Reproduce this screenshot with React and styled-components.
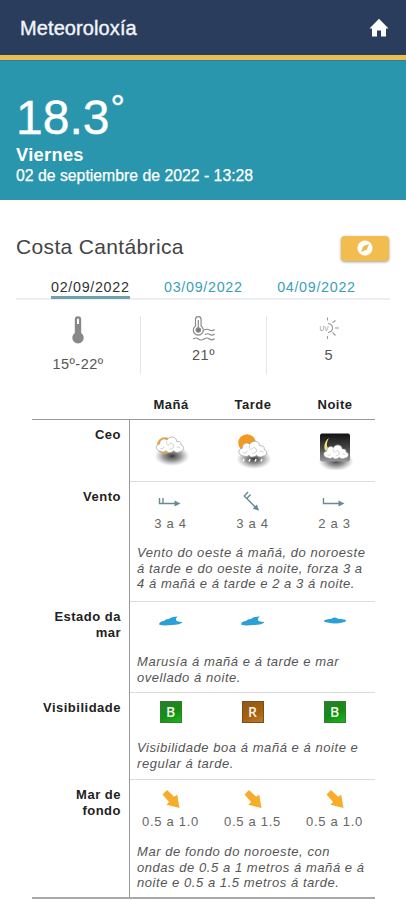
import React from "react";
import styled, { createGlobalStyle, css } from "styled-components";

const GlobalStyle = createGlobalStyle`
  * { box-sizing: border-box; }
  body { margin: 0; background: #fff; font-family: "Liberation Sans", Arial, sans-serif; color: #444; overflow: hidden; }
`;

const Page = styled.main`
  width: 406px;
  height: 900px;
  overflow: hidden;
  background: #fff;
`;

const TopBar = styled.header`
  height: 60px;
  padding: 0 17px 4px 20px;
  display: flex;
  align-items: center;
  justify-content: space-between;
  background: #2a3d5c;
  border-bottom: 5px solid #eebc55;
`;

const AppTitle = styled.h1`
  margin: 0;
  padding-top: 4px;
  font-size: 20px;
  font-weight: 400;
  line-height: 24px;
  color: #f1f4fa;
  -webkit-text-stroke: 0.4px #f1f4fa;
  letter-spacing: 0.1px;
`;

const HomeIcon = styled.svg`
  width: 20px;
  height: 20px;
  margin-top: 4px;
  fill: #fff;
`;

const Current = styled.section`
  height: 140px;
  padding: 29px 16px 0;
  background: #2996ae;
  border-top: 1px solid #24859a;
  color: #fff;
`;

const Temperature = styled.div`
  display: flex;
  align-items: flex-start;
  height: 56px;
  font-size: 48px;
  line-height: 55px;
  -webkit-text-stroke: 0.4px #fff;
`;

const Degree = styled.span`
  font-size: 36px;
  line-height: 38px;
  margin: 0 0 0 1px;
`;

const Weekday = styled.div`
  font-size: 18.3px;
  font-weight: 700;
  line-height: 18px;
  margin-bottom: 2px;
  letter-spacing: 0.3px;
`;

const DateLine = styled.div`
  font-size: 15.8px;
  line-height: 20px;
  -webkit-text-stroke: 0.25px #fff;
`;

const Zone = styled.section`
  padding: 35px 16px 0;
`;

const ZoneHead = styled.div`
  display: flex;
  justify-content: space-between;
  align-items: center;
  height: 26px;
`;

const ZoneName = styled.h2`
  margin: -2px 0 0;
  font-size: 21px;
  font-weight: 400;
  line-height: 24px;
  letter-spacing: 0.35px;
  color: #444;
`;

const CompassButton = styled.button`
  width: 48px;
  height: 25px;
  margin: 0 1px 0 0;
  padding: 0;
  border: 0;
  border-radius: 4px;
  display: grid;
  place-items: center;
  background: #f2bd4e;
  box-shadow: 0 1px 3px rgba(0, 0, 0, 0.4);
`;

const Tabs = styled.nav`
  display: flex;
  gap: 34.5px;
  height: 26px;
  margin-top: 13px;
  padding-left: 35px;
  border-bottom: 2px solid #eceef3;
  width: 374px;
`;

const Tab = styled.span`
  height: 25px;
  padding-top: 5px;
  font-size: 14.3px;
  line-height: 17px;
  letter-spacing: 0.7px;
  white-space: nowrap;
  color: #3c9fb9;
  ${(p) =>
    p.$active &&
    css`
      color: #333;
      border-bottom: 3px solid #6fa0ae;
    `}
`;

const Summary = styled.div`
  display: grid;
  grid-template-columns: 125px 126px 123px;
  height: 58px;
  margin-top: 16px;
`;

const SummaryItem = styled.div`
  display: flex;
  flex-direction: column;
  align-items: center;
  gap: ${(p) => p.$gap || 2}px;
  font-size: 14.5px;
  line-height: 18px;
  letter-spacing: ${(p) => p.$track || 0.1}px;
  color: #555;
  border-right: ${(p) => (p.$last ? 0 : 1)}px solid #e6e6e6;
`;

const Forecast = styled.div`
  display: grid;
  grid-template-columns: 98px 245px;
  grid-template-rows: 46px 62px 120px 91px 87px 117px;
  width: 343px;
  margin-left: 16px;
  border-bottom: 2px solid #a9a9a9;
`;

const HeadCell = styled.div`
  border-bottom: 1px solid #999;
`;

const Periods = styled(HeadCell)`
  display: grid;
  grid-template-columns: repeat(3, 82px);
  align-items: center;
  padding: 16px 0 0;
  margin-right: 0;
  font-size: 13px;
  font-weight: 700;
  letter-spacing: 0.5px;
  text-align: center;
  color: #222;
  line-height: 16px;
`;

const Label = styled.div`
  padding: 7px 8px 0 16px;
  margin-left: -12px;
  border-right: 1px solid #999;
  font-size: 13px;
  line-height: 15.7px;
  font-weight: 700;
  letter-spacing: 0.5px;
  text-align: right;
  color: #222;
`;

const Cell = styled.div`
  border-bottom: ${(p) => (p.$last ? 0 : 1)}px solid #dcdcdc;
`;

const Icons = styled.div`
  display: grid;
  grid-template-columns: repeat(3, 82px);
  justify-items: center;
  align-items: start;
  height: ${(p) => p.$height}px;
  padding-top: ${(p) => p.$top}px;
  margin-left: -0.5px;
`;

const Reading = styled.div`
  display: flex;
  flex-direction: column;
  align-items: center;
  gap: ${(p) => p.$gap || 0}px;
  font-size: 13px;
  line-height: 16px;
  letter-spacing: 0.7px;
  white-space: nowrap;
  color: #666;
`;

const Note = styled.p`
  margin: 0;
  padding-left: 7px;
  font-size: 13px;
  font-style: italic;
  line-height: 15.7px;
  letter-spacing: 0.55px;
  white-space: nowrap;
  color: #555;
`;

const Grade = styled.span`
  width: 22px;
  height: 22px;
  display: grid;
  place-items: center;
  border: 1px solid ${(p) => (p.$fair ? "#75501c" : "#327e2e")};
  background: ${(p) =>
    p.$fair
      ? "linear-gradient(155deg, #945716, #a8610e 60%, #be7a2e)"
      : "linear-gradient(155deg, #28802a, #148c14 55%, #18b818)"};
  color: #f3f5e8;
  font: 600 14px/18px "Open Sans", sans-serif;
`;

function Compass() {
  return (
    <svg width="16" height="16" viewBox="0 0 16 16">
      <circle cx="8" cy="8" r="7.6" fill="#fff" />
      <path d="M12 4 9.700 9.700 4 12 6.300 6.300Z" fill="#f0b94d" />
    </svg>
  );
}

function Thermometer() {
  return (
    <svg width="14" height="28" viewBox="0 0 14 28">
      <path d="M3.800 3.500a3.200 3.200 0 0 1 6.400 0V17a5.700 5.700 0 1 1-6.400 0Z" fill="#888" />
      <path d="M6 3.500a1 1 0 0 1 2 0V8H6Z" fill="#fff" />
    </svg>
  );
}

function WaterThermometer() {
  return (
    <svg width="26" height="26" viewBox="0 0 26 26" fill="none" stroke="#8a8a8a" strokeWidth="1.2">
      <path d="M4.500 3.500a2.800 2.800 0 0 1 5.600 0V10a5 5 0 1 1-5.600 0Z" />
      <path d="M7.300 4v9" />
      <circle cx="7.300" cy="14" r="2.200" fill="#777" />
      <path d="M13 14q3-1.500 5.500 0t5-.5M14 18.500q3-1.500 5 0t4.500-.5M2 23q3-2 5.500 0t5.500 0 5.500 0 5-.5" />
    </svg>
  );
}

const UvText = styled.text`
  font: 6.5px "Liberation Sans", sans-serif;
  fill: #999;
`;

function UvSun() {
  return (
    <svg width="24" height="24" viewBox="0 0 24 24" fill="none" stroke="#999" strokeWidth="1.100">
      <path d="M11 7.500q4.500.5 4.500 4.500T11 16.500M10.500 1.500v3M15.500 6.500 18.500 4.500M18 12h4M15.500 16.500l3 3M10.500 20v3" />
      <UvText x="2.500" y="14.500" stroke="none">UV</UvText>
    </svg>
  );
}

function Cloud() {
  return (
    <g fill="#fff" stroke="#999" strokeWidth=".8">
      <path d="M7 25C0 25-1 16 5 16c0-6 6-8 9-5 3-6 12-4 12 2 4-1 6 2 5 4 5 1 4 8-1 8-3 2-6 1-8-1-3 3-7 3-9 0-2 2-4 2-6 1Z" />
      <path d="M6 21q3 2 5-2M14 12q-2 4 2 6M17 22q6 0 5-5-3-4-6 0M26 20q3-2 4 1" fill="none" stroke="#bbb" />
    </g>
  );
}

function Shadow({ y }) {
  return (
    <>
      <defs>
        <radialGradient id={`cloud-shadow-${y}`}>
          <stop offset="0" stopColor="#222" stopOpacity=".9" />
          <stop offset=".5" stopColor="#555" stopOpacity=".6" />
          <stop offset="1" stopColor="#777" stopOpacity="0" />
        </radialGradient>
      </defs>
      <ellipse cx="19" cy={y} rx="17.500" ry="10" fill={`url(#cloud-shadow-${y})`} />
    </>
  );
}

function SunCloud() {
  return (
    <svg width="36" height="36" viewBox="0 0 36 36">
      <Shadow y={26} />
      <circle cx="12" cy="15.500" r="8.300" fill="#f2a527" />
      <g transform="translate(2.500 1) scale(.82)"><Cloud /></g>
    </svg>
  );
}

function SunRain() {
  return (
    <svg width="36" height="40" viewBox="0 0 36 40">
      <Shadow y={29} />
      <circle cx="12" cy="13" r="8.800" fill="#f29a20" />
      <g transform="translate(3 5) scale(.84)"><Cloud /></g>
      <path d="m9 29-1 2.500m7-2.500-1 2.500m7-2.500-1 2.500m7-2.500-1 2.500" stroke="#fff" strokeWidth="1.500" />
    </svg>
  );
}

function NightCloud() {
  return (
    <svg width="36" height="40" viewBox="0 0 36 40">
      <defs>
        <linearGradient id="night" x2="0" y2="1">
          <stop stopColor="#111" />
          <stop offset=".5" stopColor="#444" />
          <stop offset="1" stopColor="#999" />
        </linearGradient>
      </defs>
      <Shadow y={31} />
      <rect x="3" y="3.500" width="30" height="28" rx="2" fill="url(#night)" />
      <path d="M12 8c-5 3-6 11-3 13l4-2c-4-1-4-6-1-11Z" fill="#f4e37d" />
      <g transform="translate(6 9.500) scale(.74)"><Cloud /></g>
    </svg>
  );
}

function WindArrow({ barbs = 2, turn = 0 }) {
  return (
    <svg width="26" height="26" viewBox="0 0 26 26" fill="none" stroke="#688a94" strokeWidth="1.400">
      <g transform={`rotate(${turn} 13 13)`}>
        <path d={barbs === 2 ? "M2.500 8v5.500H20M6 8v5.500" : "M2.500 8v5.500H20"} />
        <path d="m17.500 10.500 6 3-6 3Z" fill="#688a94" stroke="none" />
      </g>
    </svg>
  );
}

function Wave({ calm }) {
  return (
    <svg width="24" height="10" viewBox="0 0 24 10" fill="#2aa0d6">
      {calm ? (
        <path d="M1 4.500Q4 2.500 8 3q2-2 4-1.500T16 3q5-.5 7.500 1.500-1 1.500-4 2-7 2-15 0-4-.5-3.500-2Z" />
      ) : (
        <path d="M0 8.500Q.5 5 5 5 7 2.500 10 3 12 .5 19 .5q-3 1.500-1.500 4.500 3 1 6 1-2 3-11 3-9 1-12.500-.5Z" />
      )}
    </svg>
  );
}

function SwellArrow() {
  return (
    <svg width="20" height="20" viewBox="0 0 20 20" fill="#f6ad2c">
      <path d="M1.500 5.500 6 1l7.200 6.700 3-2.200L18.500 19 5.500 15.800 8 13Z" />
    </svg>
  );
}

export default function App() {
  return (
    <Page>
      <GlobalStyle />
      <TopBar>
        <AppTitle>Meteoroloxía</AppTitle>
        <HomeIcon viewBox="0 0 20 20">
          <path d="M10 .8 19.500 10.500H17V18.500h-5v-6H8v6H3v-8H.5Z" />
        </HomeIcon>
      </TopBar>
      <Current>
        <Temperature>18.3<Degree>°</Degree></Temperature>
        <Weekday>Viernes</Weekday>
        <DateLine>02 de septiembre de 2022 - 13:28</DateLine>
      </Current>
      <Zone>
        <ZoneHead>
          <ZoneName>Costa Cantábrica</ZoneName>
          <CompassButton aria-label="Mapa"><Compass /></CompassButton>
        </ZoneHead>
        <Tabs>
          <Tab $active>02/09/2022</Tab>
          <Tab>03/09/2022</Tab>
          <Tab>04/09/2022</Tab>
        </Tabs>
        <Summary>
          <SummaryItem $gap={11} $track={0.45}><Thermometer />15º-22º</SummaryItem>
          <SummaryItem $gap={4} $track={0.5}><WaterThermometer />21º</SummaryItem>
          <SummaryItem $last $gap={6}><UvSun />5</SummaryItem>
        </Summary>
        <Forecast>
          <HeadCell />
          <Periods><span>Mañá</span><span>Tarde</span><span>Noite</span></Periods>

          <Label>Ceo</Label>
          <Cell><Icons $top={10} $height={61}><SunCloud /><SunRain /><NightCloud /></Icons></Cell>

          <Label>Vento</Label>
          <Cell>
            <Icons $top={8} $height={63}>
              <Reading><WindArrow />3 a 4</Reading>
              <Reading><WindArrow turn={45} />3 a 4</Reading>
              <Reading><WindArrow barbs={1} />2 a 3</Reading>
            </Icons>
            <Note>Vento do oeste á mañá, do noroeste<br />á tarde e do oeste á noite, forza 3 a<br />4 á mañá e á tarde e 2 a 3 á noite.</Note>
          </Cell>

          <Label>Estado da mar</Label>
          <Cell>
            <Icons $top={14} $height={52}><Wave /><Wave /><Wave calm /></Icons>
            <Note>Marusía á mañá e á tarde e mar<br />ovellado á noite.</Note>
          </Cell>

          <Label>Visibilidade</Label>
          <Cell>
            <Icons $top={8} $height={47}><Grade>B</Grade><Grade $fair>R</Grade><Grade>B</Grade></Icons>
            <Note>Visibilidade boa á mañá e á noite e<br />regular á tarde.</Note>
          </Cell>

          <Label>Mar de<br />fondo</Label>
          <Cell $last>
            <Icons $top={9} $height={64}>
              <Reading $gap={5}><SwellArrow />0.5 a 1.0</Reading>
              <Reading $gap={5}><SwellArrow />0.5 a 1.5</Reading>
              <Reading $gap={5}><SwellArrow />0.5 a 1.0</Reading>
            </Icons>
            <Note>Mar de fondo do noroeste, con<br />ondas de 0.5 a 1 metros á mañá e á<br />noite e 0.5 a 1.5 metros á tarde.</Note>
          </Cell>
        </Forecast>
      </Zone>
    </Page>
  );
}
